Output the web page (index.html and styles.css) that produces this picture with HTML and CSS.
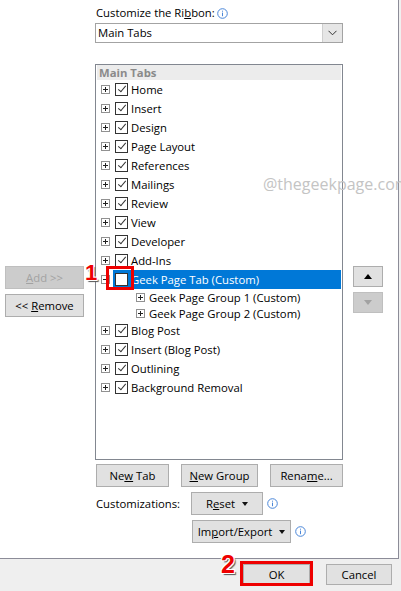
FILE: index.html
```html
<!DOCTYPE html>
<html lang="en">
<head>
    <meta charset="UTF-8">
    <title>Customize the Ribbon</title>
    <link rel="stylesheet" href="styles.css">
</head>
<body>
    <div class="dialog">
        <div class="main">
            <div class="side-left">
                <button class="btn side-btn disabled"><u>A</u>dd &gt;&gt;</button>
                <button class="btn side-btn">&lt;&lt; <u>R</u>emove</button>
            </div>
            <div class="center">
                <div class="label">
                    <span>Customize the Ri<u>b</u>bon:</span>
                    <svg class="info" width="11" height="11" viewBox="0 0 11 11"><circle cx="5.5" cy="5.5" r="4.8" fill="none" stroke="#4a86d8"/><path d="M5.5 4.6v3.6M5.5 2.7v1" stroke="#4a86d8"/></svg>
                </div>
                <div class="select">
                    <span class="select-text">Main Tabs</span>
                    <span class="select-arrow"><svg width="9" height="6" viewBox="0 0 9 6"><path d="M0.5 0.8 L4.5 4.8 L8.5 0.8" fill="none" stroke="#333"/></svg></span>
                </div>
                <div class="listbox">
                    <div class="list-head">Main Tabs</div>
                    <div class="row"><span class="exp"></span><span class="item"><span class="chk on"></span>Home</span></div>
                    <div class="row"><span class="exp"></span><span class="item"><span class="chk on"></span>Insert</span></div>
                    <div class="row"><span class="exp"></span><span class="item"><span class="chk on"></span>Design</span></div>
                    <div class="row"><span class="exp"></span><span class="item"><span class="chk on"></span>Page Layout</span></div>
                    <div class="row"><span class="exp"></span><span class="item"><span class="chk on"></span>References</span></div>
                    <div class="row"><span class="exp"></span><span class="item"><span class="chk on"></span>Mailings</span></div>
                    <div class="row"><span class="exp"></span><span class="item"><span class="chk on"></span>Review</span></div>
                    <div class="row"><span class="exp"></span><span class="item"><span class="chk on"></span>View</span></div>
                    <div class="row"><span class="exp"></span><span class="item"><span class="chk on"></span>Developer</span></div>
                    <div class="row"><span class="exp"></span><span class="item"><span class="chk on"></span>Add-Ins</span></div>
                    <div class="row"><span class="exp minus"></span><span class="item selected"><span class="chk"></span>Geek Page Tab (Custom)</span></div>
                    <div class="row group"><span class="exp"></span><span>Geek Page Group 1 (Custom)</span></div>
                    <div class="row group"><span class="exp"></span><span>Geek Page Group 2 (Custom)</span></div>
                    <div class="row"><span class="exp"></span><span class="item"><span class="chk on"></span>Blog Post</span></div>
                    <div class="row"><span class="exp"></span><span class="item"><span class="chk on"></span>Insert (Blog Post)</span></div>
                    <div class="row"><span class="exp"></span><span class="item"><span class="chk on"></span>Outlining</span></div>
                    <div class="row"><span class="exp"></span><span class="item"><span class="chk on"></span>Background Removal</span></div>
                </div>
                <div class="btn-row">
                    <button class="btn w73">Ne<u>w</u> Tab</button>
                    <button class="btn w77"><u>N</u>ew Group</button>
                    <button class="btn w73">Rena<u>m</u>e...</button>
                </div>
                <div class="cust-row">
                    <span class="cust-label">Customizations:</span>
                    <button class="btn drop w72"><span>R<u>e</u>set</span><span class="caret"></span></button>
                    <svg class="info" width="11" height="11" viewBox="0 0 11 11"><circle cx="5.5" cy="5.5" r="4.8" fill="none" stroke="#4a86d8"/><path d="M5.5 4.6v3.6M5.5 2.7v1" stroke="#4a86d8"/></svg>
                </div>
                <div class="cust-row indent">
                    <button class="btn drop w99"><span>Im<u>p</u>ort/Export</span><span class="caret"></span></button>
                    <svg class="info" width="11" height="11" viewBox="0 0 11 11"><circle cx="5.5" cy="5.5" r="4.8" fill="none" stroke="#4a86d8"/><path d="M5.5 4.6v3.6M5.5 2.7v1" stroke="#4a86d8"/></svg>
                </div>
            </div>
            <div class="side-right">
                <button class="btn arrow-btn"><span class="tri-up"></span></button>
                <button class="btn arrow-btn disabled"><span class="tri-down"></span></button>
            </div>
        </div>
        <div class="footer">
            <button class="btn ok">OK</button>
            <button class="btn cancel">Cancel</button>
        </div>

        <!-- annotations drawn over the dialog -->
        <div class="watermark">@thegeekpage.com</div>
        <div class="mark mark-1">1</div>
        <div class="red-box box-1"></div>
        <div class="mark mark-2">2</div>
        <div class="red-box box-2"></div>
    </div>
</body>
</html>
```

FILE: styles.css
```css
body {
    margin: 0;
    background-color: #f0f0f0;
    font-family: "Open Sans", "Liberation Sans", sans-serif;
    font-size: 11.3px;
    color: #000;
}
.dialog {
    position: relative;
    width: 401px;
    height: 591px;
    overflow: hidden;
    display: flex;
    flex-direction: column;
}
.main {
    display: flex;
    width: 398px;
    height: 558px;
    background-color: #fff;
    border-right: 1px solid #8c8c98;
    border-bottom: 1px solid #8c8c98;
}
.btn {
    font: inherit;
    color: #000;
    background-color: #e1e1e1;
    border: 1px solid #adadad;
    height: 23px;
    padding: 0;
    line-height: 19px;
    box-sizing: border-box;
    text-align: center;
}
.btn u {
    text-underline-offset: 1px;
}
.btn.disabled {
    background-color: #cccccc;
    border-color: #bfbfbf;
    color: #a2a2a2;
}
.side-left {
    width: 95px;
    box-sizing: border-box;
    padding: 266px 0 0 5px;
    display: flex;
    flex-direction: column;
    align-items: flex-start;
    gap: 5px;
}
.side-btn {
    width: 79px;
}
.center {
    width: 248px;
    padding-top: 5px;
}
.label {
    height: 16px;
    line-height: 16px;
    padding-left: 1px;
    display: flex;
    align-items: center;
    white-space: nowrap;
}
.info {
    display: block;
    flex: none;
}
.label .info {
    margin-left: 2px;
}
.select {
    margin-top: 2px;
    height: 20px;
    box-sizing: border-box;
    border: 1px solid #a3a3a3;
    display: flex;
}
.select-text {
    flex: 1;
    padding-left: 2px;
    line-height: 18px;
}
.select-arrow {
    width: 19px;
    background-color: #e6e6e6;
    border-left: 1px solid #cfcfcf;
    display: flex;
    align-items: center;
    justify-content: center;
}
.listbox {
    margin-top: 21px;
    height: 396px;
    box-sizing: border-box;
    border: 1px solid #828790;
    padding: 0 1px;
}
.list-head {
    height: 15px;
    line-height: 15px;
    background-color: #ececec;
    color: #8a8a8a;
    font-weight: bold;
    padding-left: 2px;
}
.row {
    display: flex;
    align-items: center;
    height: 19px;
    padding-left: 4px;
    white-space: nowrap;
}
.row.group {
    height: 16px;
    padding-left: 39px;
}
.exp {
    position: relative;
    width: 9px;
    height: 9px;
    box-sizing: border-box;
    border: 1px solid #919191;
    margin-right: 3px;
    flex: none;
}
.row.group .exp {
    margin-right: 4px;
}
.exp::before {
    content: "";
    position: absolute;
    left: 1px;
    top: 3px;
    width: 5px;
    height: 1px;
    background-color: #222;
}
.exp::after {
    content: "";
    position: absolute;
    left: 3px;
    top: 1px;
    width: 1px;
    height: 5px;
    background-color: #222;
}
.exp.minus::after {
    display: none;
}
.item {
    display: flex;
    align-items: center;
    height: 19px;
    padding-left: 2px;
}
.item.selected {
    flex: 1;
    background-color: #0078d7;
    color: #fff;
}
.chk {
    position: relative;
    width: 13px;
    height: 13px;
    box-sizing: border-box;
    border: 1px solid #333;
    background-color: #fff;
    margin-right: 3px;
    flex: none;
}
.chk.on::after {
    content: "";
    position: absolute;
    left: 4px;
    top: 0px;
    width: 3px;
    height: 7px;
    border-right: 1px solid #333;
    border-bottom: 1px solid #333;
    transform: rotate(40deg);
}
.btn-row {
    margin-top: 4px;
    padding-left: 1px;
    display: flex;
    justify-content: space-between;
}
.w72 { width: 72px; }
.w73 { width: 73px; }
.w77 { width: 77px; }
.w99 { width: 99px; }
.cust-row {
    margin-top: 5px;
    display: flex;
    align-items: center;
}
.cust-row.indent {
    padding-left: 97px;
}
.cust-label {
    width: 96px;
    padding-left: 1px;
    box-sizing: border-box;
}
.cust-row .info {
    margin-left: 4px;
}
.drop {
    display: flex;
    align-items: center;
    justify-content: center;
    gap: 7px;
    white-space: nowrap;
}
.caret {
    width: 0;
    height: 0;
    border-left: 3.5px solid transparent;
    border-right: 3.5px solid transparent;
    border-top: 4px solid #111;
}
.side-right {
    flex: 1;
    padding: 266px 0 0 10px;
    display: flex;
    flex-direction: column;
    gap: 5px;
}
.arrow-btn {
    width: 30px;
    height: 21px;
    display: flex;
    align-items: center;
    justify-content: center;
}
.tri-up {
    width: 0;
    height: 0;
    border-left: 4px solid transparent;
    border-right: 4px solid transparent;
    border-bottom: 5px solid #000;
}
.tri-down {
    width: 0;
    height: 0;
    border-left: 4px solid transparent;
    border-right: 4px solid transparent;
    border-top: 5px solid #a2a2a2;
}
.footer {
    flex: 1;
    display: flex;
    justify-content: flex-end;
    gap: 16px;
    padding: 5px 9px 0 0;
    background-color: #efefef;
}
.ok {
    width: 67px;
    height: 21px;
}
.cancel {
    width: 66px;
    height: 21px;
}
.watermark {
    position: absolute;
    left: 263px;
    top: 173px;
    font-size: 16px;
    color: #c4c4c4;
    white-space: nowrap;
}
.mark {
    position: absolute;
    font-family: "Liberation Sans", sans-serif;
    font-weight: bold;
    color: #ee0000;
    text-shadow: -1px -1px 0 #fff, 1px -1px 0 #fff, -1px 1px 0 #fff, 1px 1px 0 #fff, 2px 2px 1px #555;
}
.mark-1 {
    left: 85px;
    top: 260px;
    font-size: 22px;
}
.mark-2 {
    left: 221px;
    top: 550px;
    font-size: 25px;
}
.red-box {
    position: absolute;
    border: 3px solid #ee0000;
    box-sizing: border-box;
}
.box-1 {
    left: 106px;
    top: 266px;
    width: 28px;
    height: 24px;
}
.box-2 {
    left: 240px;
    top: 561px;
    width: 73px;
    height: 25px;
}
```
